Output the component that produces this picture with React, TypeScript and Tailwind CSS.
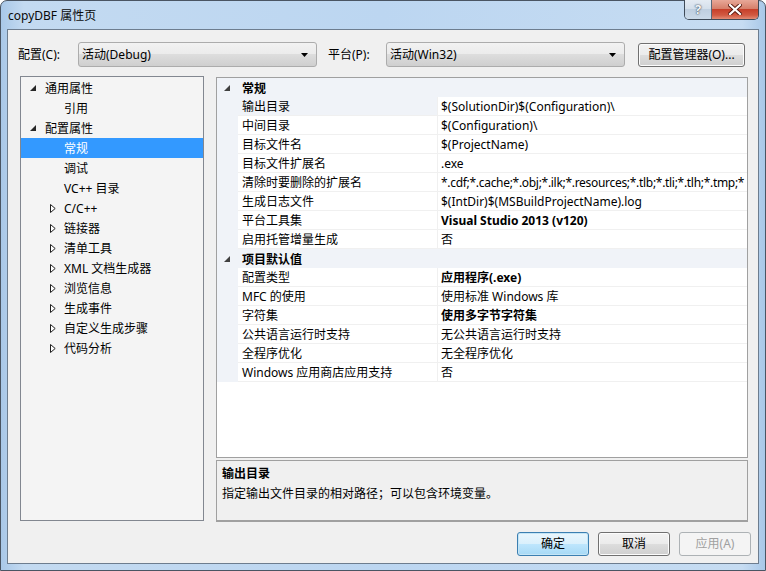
import React from "react";

const Expanded = ({ color = "#262626" }: { color?: string }) => (
  <svg width="6" height="6" viewBox="0 0 6 6">
    <path d="M6 0 L6 6 L0 6 Z" fill={color} />
  </svg>
);

const Collapsed = () => (
  <svg width="6" height="9" viewBox="0 0 6 9">
    <path d="M0.5 0.5 L5.2 4.5 L0.5 8.5 Z" fill="#ffffff" stroke="#1e1e1e" strokeWidth="1" />
  </svg>
);

type TreeItem = { text: string; level: 0 | 1; state?: "open" | "closed"; selected?: boolean };

const treeItems: TreeItem[] = [
  { text: "通用属性", level: 0, state: "open" },
  { text: "引用", level: 1 },
  { text: "配置属性", level: 0, state: "open" },
  { text: "常规", level: 1, selected: true },
  { text: "调试", level: 1 },
  { text: "VC++ 目录", level: 1 },
  { text: "C/C++", level: 1, state: "closed" },
  { text: "链接器", level: 1, state: "closed" },
  { text: "清单工具", level: 1, state: "closed" },
  { text: "XML 文档生成器", level: 1, state: "closed" },
  { text: "浏览信息", level: 1, state: "closed" },
  { text: "生成事件", level: 1, state: "closed" },
  { text: "自定义生成步骤", level: 1, state: "closed" },
  { text: "代码分析", level: 1, state: "closed" },
];

type Prop = { name: string; value: string; bold?: boolean; selected?: boolean; tight?: boolean };

const general: Prop[] = [
  { name: "输出目录", value: "$(SolutionDir)$(Configuration)\\", selected: true },
  { name: "中间目录", value: "$(Configuration)\\" },
  { name: "目标文件名", value: "$(ProjectName)" },
  { name: "目标文件扩展名", value: ".exe" },
  { name: "清除时要删除的扩展名", value: "*.cdf;*.cache;*.obj;*.ilk;*.resources;*.tlb;*.tli;*.tlh;*.tmp;*", tight: true },
  { name: "生成日志文件", value: "$(IntDir)$(MSBuildProjectName).log" },
  { name: "平台工具集", value: "Visual Studio 2013 (v120)", bold: true },
  { name: "启用托管增量生成", value: "否" },
];

const defaults: Prop[] = [
  { name: "配置类型", value: "应用程序(.exe)", bold: true },
  { name: "MFC 的使用", value: "使用标准 Windows 库" },
  { name: "字符集", value: "使用多字节字符集", bold: true },
  { name: "公共语言运行时支持", value: "无公共语言运行时支持" },
  { name: "全程序优化", value: "无全程序优化" },
  { name: "Windows 应用商店应用支持", value: "否" },
];

function Combo({ text }: { text: string }) {
  return (
    <div className="flex h-[25px] w-[239px] items-center rounded-[3px] border border-[#acacac] bg-[linear-gradient(to_bottom,#f2f2f2,#ebebeb_50%,#dddddd_50%,#cfcfcf)] pl-[3px] pr-[8px]">
      <span className="flex-1 whitespace-nowrap">{text}</span>
      <svg width="7" height="4" viewBox="0 0 7 4">
        <path d="M0 0 L7 0 L3.5 4 Z" fill="#000" />
      </svg>
    </div>
  );
}

function Btn({ children, def, disabled, w }: { children: React.ReactNode; def?: boolean; disabled?: boolean; w: string }) {
  const base = "flex h-[24px] items-center justify-center rounded-[3px] border";
  if (disabled)
    return <div className={`${base} ${w} border-[#adb2b5] bg-[#f4f4f4] text-[#a0a0a0]`}>{children}</div>;
  if (def)
    return (
      <div className={`${base} ${w} border-[#3c7fb1] bg-[linear-gradient(to_bottom,#eaf6fd,#d9f0fc_50%,#bee6fd_50%,#a7d9f5)] shadow-[inset_0_0_0_1px_#c4e5f6]`}>
        {children}
      </div>
    );
  return (
    <div className={`${base} ${w} border-[#707070] bg-[linear-gradient(to_bottom,#f2f2f2,#ebebeb_50%,#dddddd_50%,#cfcfcf)] shadow-[inset_0_0_0_1px_#fcfcfc]`}>
      {children}
    </div>
  );
}

function PropRow({ p }: { p: Prop }) {
  return (
    <div className="flex h-[19px]">
      <div className="w-[21px] shrink-0 bg-[#f0f3f8]" />
      <div className={`flex w-[199px] shrink-0 items-center border-b border-[#f0f0f0] pl-[4px] ${p.selected ? "bg-[#f0f3f8]" : "bg-white"}`}>
        <span className="whitespace-nowrap pt-[2px]">{p.name}</span>
      </div>
      <div className="flex min-w-0 flex-1 items-center overflow-hidden border-b border-l border-[#f0f0f0] bg-white pl-[3px]">
        <span className={`whitespace-nowrap pt-[2px] ${p.bold ? "font-bold" : ""} ${p.tight ? "tracking-[-0.3px]" : ""}`}>{p.value}</span>
      </div>
    </div>
  );
}

function Category({ text }: { text: string }) {
  return (
    <div className="flex h-[19px] items-center bg-[#f0f3f8]">
      <div className="flex w-[21px] items-center justify-end pr-[8px]">
        <Expanded color="#404040" />
      </div>
      <span className="pl-[4px] pt-[2px] font-bold">{text}</span>
    </div>
  );
}

export default function App() {
  return (
    <div className="h-[571px] w-[766px] bg-white font-[family-name:'Noto_Sans','Noto_Sans_CJK_SC',sans-serif] text-[12px] leading-none text-black">
      <div className="flex h-full w-full flex-col rounded-t-[7px] border border-[#4a5563] bg-[linear-gradient(to_right,#a9c8e8,#c3daf1_3%,#bcd6f1_50%,#c6dcf2_97%,#a9c8e8)]">
        {/* title bar */}
        <div className="relative flex h-[28px] shrink-0 items-center pl-[7px]">
          <span className="pt-[2px] text-[12px] text-[#0a0a0a]">copyDBF 属性页</span>
          <div className="absolute right-[6px] top-[-1px] flex h-[20px] overflow-hidden rounded-b-[5px] border border-[#3e4a58] border-t-0">
            <div className="flex w-[27px] items-center justify-center border-r border-[#5a6878] bg-[linear-gradient(to_bottom,#e4ebf3,#d3deea_50%,#bfcfe0_50%,#cbdae9)] text-[13px] font-bold text-[#f4f6f8] [text-shadow:0_0_2px_#3a4a5c,0_0_1px_#3a4a5c]">
              ?
            </div>
            <div className="flex w-[46px] items-center justify-center bg-[linear-gradient(to_bottom,#e8a898,#d6806b_45%,#c7402a_50%,#d25a42_80%,#e38c75)]">
              <svg width="14" height="11" viewBox="0 0 14 11">
                <path d="M2 1 L12 10 M12 1 L2 10" stroke="#5a1a10" strokeWidth="4" strokeLinecap="square" />
                <path d="M2 1 L12 10 M12 1 L2 10" stroke="#ffffff" strokeWidth="2.2" strokeLinecap="square" />
              </svg>
            </div>
          </div>
        </div>
        {/* client */}
        <div className="mx-[6px] mb-[6px] flex flex-1 flex-col border border-[#6d7d8f] bg-[#f0f0f0]">
          {/* toolbar */}
          <div className="mt-[12px] flex h-[25px] items-center pl-[10px]">
            <span className="w-[60px]">配置(C):</span>
            <Combo text="活动(Debug)" />
            <span className="ml-[11px] w-[58px]">平台(P):</span>
            <Combo text="活动(Win32)" />
            <div className="ml-[13px]">
              <Btn w="w-[107px]">配置管理器(O)...</Btn>
            </div>
          </div>
          {/* main */}
          <div className="mt-[9px] flex h-[446px] pl-[12px]">
            <div className="h-[445px] w-[184px] border border-[#828790] bg-[#f4f4f4] pt-[1px]">
              {treeItems.map((t, i) => (
                <div
                  key={i}
                  className={`flex h-[20px] items-center ${t.selected ? "bg-[#3399ff] text-white" : ""} ${t.level === 0 ? "pl-[9px]" : "pl-[29px]"}`}
                >
                  <div className={`flex items-center ${t.level === 0 ? "w-[15px]" : "w-[14px]"}`}>
                    {t.state === "open" && <Expanded />}
                    {t.state === "closed" && <Collapsed />}
                  </div>
                  <span className="whitespace-nowrap pt-[2px]">{t.text}</span>
                </div>
              ))}
            </div>
            <div className="ml-[12px] flex w-[532px] flex-col">
              <div className="mt-[1px] h-[381px] overflow-hidden border border-[#a0a0a0] bg-white">
                <Category text="常规" />
                {general.map((p, i) => (
                  <PropRow key={i} p={p} />
                ))}
                <Category text="项目默认值" />
                {defaults.map((p, i) => (
                  <PropRow key={i} p={p} />
                ))}
              </div>
              <div className="mt-[2px] h-[62px] border border-b-2 border-[#a0a0a0] bg-[#f0f0f0] px-[5px] pt-[7px]">
                <div className="font-bold">输出目录</div>
                <div className="mt-[8px]">指定输出文件目录的相对路径；可以包含环境变量。</div>
              </div>
            </div>
          </div>
          {/* buttons */}
          <div className="mt-[10px] flex justify-end gap-[9px] pr-[7px]">
            <Btn def w="w-[72px]">确定</Btn>
            <Btn w="w-[72px]">取消</Btn>
            <Btn disabled w="w-[72px]">应用(A)</Btn>
          </div>
        </div>
      </div>
    </div>
  );
}
